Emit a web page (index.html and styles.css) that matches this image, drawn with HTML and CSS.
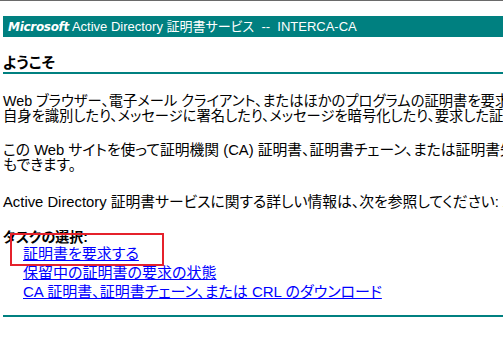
FILE: index.html
```html
<!DOCTYPE html>
<html lang="ja">
<head>
<meta charset="utf-8">
<title>Microsoft Active Directory 証明書サービス</title>
<link rel="stylesheet" href="styles.css">
</head>
<body>
<div class="topline"></div>
<div class="page">
  <div class="titlebar"><span class="ms">Microsoft</span> Active Directory 証明書サービス&nbsp; --&nbsp; INTERCA-CA</div>
  <h1 class="welcome">ようこそ</h1>
  <p class="para p1">Web ブラウザー、電子メール クライアント、またはほかのプログラムの証明書を要求するには、この Web サイトを使用してください。証明書を使うと、Web を介して通信する相手に<br>自身を識別したり、メッセージに署名したり、メッセージを暗号化したり、要求した証明書の種類によってはその他のセキュリティ タスクを実行したりできます。</p>
  <p class="para p2">この Web サイトを使って証明機関 (CA) 証明書、証明書チェーン、または証明書失効リスト (CRL) をダウンロードしたり、保留中の要求の状態を表示したりすること<br>もできます。</p>
  <p class="para p3">Active Directory 証明書サービスに関する詳しい情報は、次を参照してください: Active Directory 証明書サービスのドキュメント</p>
  <div class="tasks">
    <div class="tasks-title">タスクの選択:</div>
    <div class="task-links">
      <a href="#" class="task">証明書を要求する</a>
      <a href="#" class="task">保留中の証明書の要求の状態</a>
      <a href="#" class="task">CA 証明書、証明書チェーン、または CRL のダウンロード</a>
    </div>
    <div class="highlight"></div>
  </div>
  <div class="bottomrule"></div>
</div>
</body>
</html>
```

FILE: styles.css
```css
html, body {
  margin: 0;
  padding: 0;
  background: #ffffff;
  overflow: hidden;
}
body {
  font-family: "Liberation Sans", "Noto Sans CJK JP", sans-serif;
  font-size: 14px;
  color: #000000;
  font-feature-settings: "palt";
}
.topline {
  height: 1px;
  background: #6a6a6a;
}
.page {
  width: 760px;
  padding-left: 3px;
  white-space: nowrap;
}
.titlebar {
  margin-top: 15px;
  height: 21px;
  line-height: 21px;
  background: #008080;
  color: #ffffff;
  font-size: 13px;
  padding-left: 5px;
}
.ms {
  font-family: "DejaVu Sans", sans-serif;
  font-weight: bold;
  font-style: italic;
  font-size: 12px;
  letter-spacing: -0.3px;
}
.welcome {
  margin: 17px 0 0;
  font-size: 15px;
  font-weight: bold;
  line-height: 18px;
  height: 18px;
  border-bottom: 2px solid #008080;
}
.para {
  margin: 0;
  font-size: 14.8px;
  line-height: 15px;
}
.p1 {
  margin-top: 20px;
  font-size: 14.3px;
}
.p2 { margin-top: 19px; }
.p3 { margin-top: 22px; }
.tasks {
  position: relative;
  margin-top: 20px;
}
.tasks-title {
  font-weight: bold;
  line-height: 14px;
}
.task-links {
  display: flex;
  flex-direction: column;
  align-items: flex-start;
  padding-left: 20px;
}
.task {
  color: #0000ff;
  text-decoration: underline;
  font-size: 15px;
  line-height: 19px;
}
.highlight {
  position: absolute;
  left: 7px;
  top: 3px;
  width: 150px;
  height: 29px;
  border: 2px solid #e5212b;
}
.bottomrule {
  margin-top: 14px;
  height: 2px;
  background: #008080;
}
```
